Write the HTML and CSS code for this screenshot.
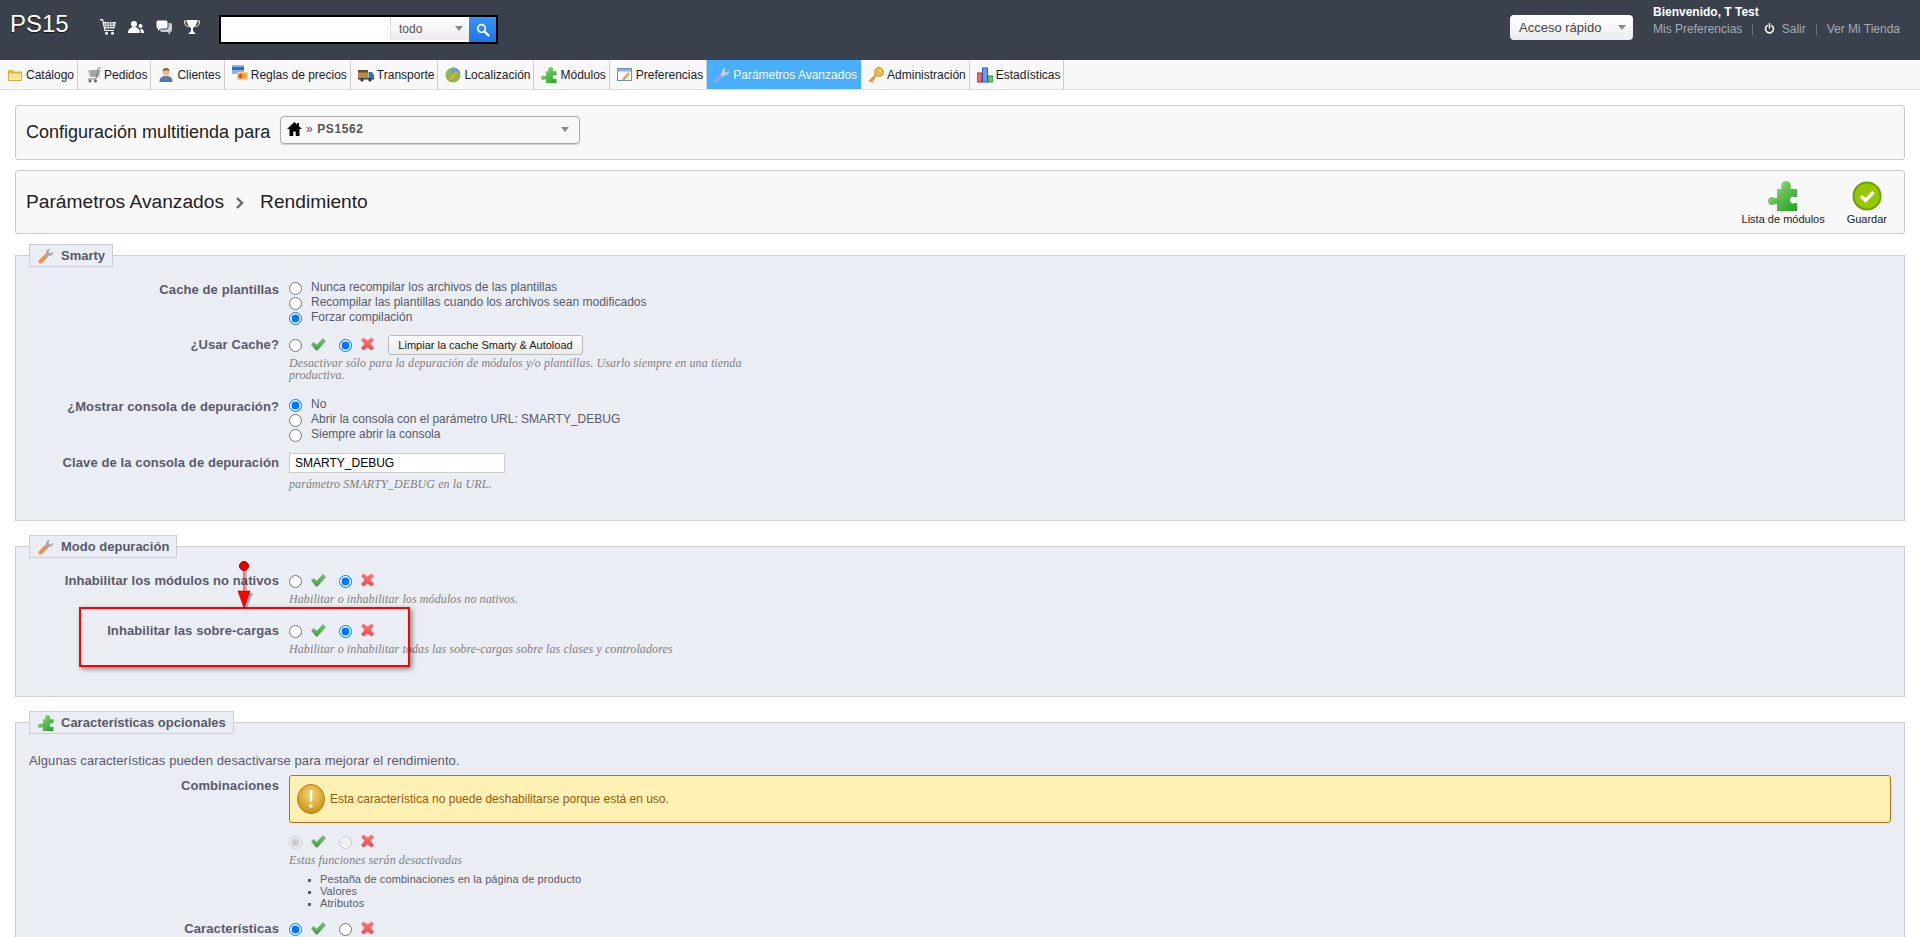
FILE: index.html
```html
<!DOCTYPE html>
<html lang="es">
<head>
<meta charset="utf-8">
<title>Rendimiento</title>
<link rel="stylesheet" href="styles.css">
</head>
<body>
<svg class="defs" width="0" height="0" aria-hidden="true">
  <defs>
    <linearGradient id="gp" x1="0" y1="0" x2="1" y2="1"><stop offset="0" stop-color="#cdeec2"/><stop offset=".45" stop-color="#63c052"/><stop offset="1" stop-color="#25a025"/></linearGradient>
    <linearGradient id="gk" x1="0" y1="0" x2="0" y2="1"><stop offset="0" stop-color="#7cc377"/><stop offset="1" stop-color="#4a9a48"/></linearGradient>
    <linearGradient id="gx" x1="0" y1="0" x2="0" y2="1"><stop offset="0" stop-color="#ff7a7c"/><stop offset="1" stop-color="#ea4a4e"/></linearGradient>
    <radialGradient id="gw" cx=".5" cy=".35" r=".7"><stop offset="0" stop-color="#f6d773"/><stop offset="1" stop-color="#c98a10"/></radialGradient>
    <symbol id="puzzle" viewBox="0 0 30 30"><path fill="url(#gp)" d="M9 8h5c-2-2-1-8 4-8s6 6 4 8h7v8h-2c-3-1-5 0-5 3s2 4 5 3h2v8H9v-7H7c-3 2-7 1-7-3s4-5 7-3h2z"/></symbol>
    <symbol id="wrench" viewBox="0 0 16 16"><path d="M2.500 13.500 8 8" stroke="#f2904a" stroke-width="4" stroke-linecap="round" fill="none"/><path fill="#a9a9a9" d="M8 5c0-3 2-4.500 4.500-4l-2 2 .5 2 2 .5 2-2c.5 2.500-1 4.500-4 4.500L9 10 6.500 7.500z"/></symbol>
    <symbol id="wrench-a" viewBox="0 0 16 16"><path d="M2.500 13.500 8 8" stroke="#8ea9d8" stroke-width="4" stroke-linecap="round" fill="none"/><path fill="#c9ced6" d="M8 5c0-3 2-4.500 4.500-4l-2 2 .5 2 2 .5 2-2c.5 2.500-1 4.500-4 4.500L9 10 6.500 7.500z"/></symbol>
    <symbol id="ok" viewBox="0 0 15 14"><path fill="url(#gk)" d="M0 7.500 3 5l2.500 3L12 1l3 3-8.500 9.500h-1.500z"/></symbol>
    <symbol id="no" viewBox="0 0 15 14"><path fill="url(#gx)" d="M0 3 2.500.5l4 3 4-3L13 3 9.500 7l3.500 4-2.500 2.500-4-3-4 3L0 11l3.500-4z"/></symbol>
  </defs>
</svg>

<header class="topbar">
  <div class="logo">PS15</div>
  <div class="quick">
    <svg class="qi" viewBox="0 0 16 16"><path fill="none" stroke="#fff" stroke-width="1.200" d="M0 .7h2.500l2.500 10.800h9"/><path fill="#fff" d="M4 3h12l-1.500 6.500H5.500z"/><path fill="none" stroke="#3a414c" stroke-width=".6" d="M4.500 5h11M5 7.300h10M7 3v6.500M9.500 3v6.500M12 3v6.500"/><circle cx="6.500" cy="14.300" r="1.500" fill="#fff"/><circle cx="12.500" cy="14.300" r="1.500" fill="#fff"/></svg>
    <svg class="qi" viewBox="0 0 16 16"><circle cx="6" cy="5" r="3" fill="#fff"/><path fill="#fff" d="M0 14c0-4 3-5 4-6h4c1 1 4 2 4 6z"/><circle cx="12.500" cy="7" r="2" fill="#fff"/><path fill="#fff" d="M12 10h2c1 .5 2 1.500 2 4h-3c0-1.500-.5-3-1-4z"/></svg>
    <svg class="qi" viewBox="0 0 16 16"><rect x="4" y="4" width="12" height="9" rx="2" fill="#c9ccd2"/><path fill="#c9ccd2" d="M11 12h3v4z"/><rect y="1" width="12" height="9" rx="2" fill="#fff" stroke="#3a414c"/><path fill="#fff" d="M2 9h3l-3 3z"/></svg>
    <svg class="qi" viewBox="0 0 16 16"><path fill="none" stroke="#fff" d="M3 2H.5c0 3 1 5 4 6M13 2h2.500c0 3-1 5-4 6"/><path fill="#fff" d="M3 1h10c0 5-2 7-4 8v3l3 3H4l3-3V9C5 8 3 6 3 1z"/></svg>
  </div>
  <div class="search">
    <div class="search-input"></div>
    <div class="search-scope"><span>todo</span><i class="caret"></i></div>
    <div class="search-btn"><svg viewBox="0 0 14 14" width="14" height="14"><circle cx="5.500" cy="5.500" r="3.800" fill="none" stroke="#fff" stroke-width="1.800"/><path d="m8.500 8.500 4 4" stroke="#fff" stroke-width="2.400" stroke-linecap="round"/></svg></div>
  </div>
  <div class="top-right">
    <div class="access"><span>Acceso rápido</span><i class="caret"></i></div>
    <div class="user">
      <div class="welcome">Bienvenido, T Test</div>
      <div class="links">
        <a class="l-pref">Mis Preferencias</a><i class="vsep"></i>
        <svg class="power" viewBox="0 0 12 12"><path fill="none" stroke="#fff" stroke-width="1.700" stroke-linecap="round" d="M3.500 2.800a4.400 4.400 0 1 0 5 0M6 .8v4.600"/></svg>
        <a class="l-out">Salir</a><i class="vsep"></i>
        <a class="l-shop">Ver Mi Tienda</a>
      </div>
    </div>
  </div>
</header>

<nav class="tabs">
  <a class="tab"><svg class="ti" viewBox="0 0 16 16"><path fill="#e7b93f" d="M1 3h5l1 1.500h8V14H1z"/><rect x="1.500" y="6" width="13" height="7.500" fill="#fbe69a" stroke="#d9a933" stroke-width=".8"/></svg>Catálogo</a>
  <a class="tab"><svg class="ti" viewBox="0 0 16 16"><path fill="#b4b8b8" d="M3 3h13l-2 7H5z"/><path fill="none" stroke="#777" d="M15.500 .8 13 1.500 11 12H3"/><path fill="none" stroke="#888" stroke-width=".6" d="M5 5h9M5.500 7.500h8M7 3l1 7M10 3v7M13 3l-1 7"/><circle cx="5" cy="14" r="1.500" fill="#666"/><circle cx="10.500" cy="14" r="1.500" fill="#666"/></svg>Pedidos</a>
  <a class="tab"><svg class="ti" viewBox="0 0 16 16"><circle cx="8" cy="5" r="3.500" fill="#eeb88e"/><path fill="#8a5a2e" d="M4.500 4c0-4 7-4 7 0-2-1-5-1-7 0z"/><path fill="#4a78c0" d="M1.500 15c0-5 3-6 6.500-6s6.500 1 6.500 6z"/><path fill="#d8632f" d="M7.500 9h1l.5 4h-2z"/></svg>Clientes</a>
  <a class="tab"><svg class="ti ti-w" viewBox="0 0 16 16"><rect x="0" y="0" width="12" height="9" fill="#8fb3dc"/><rect y="2" width="12" height="3" fill="#2e6fb5"/><rect x="5" y="7" width="11" height="8" rx="1" fill="#f6cf6a"/><circle cx="9" cy="11" r="2.500" fill="#e8383a"/><circle cx="12" cy="11" r="2.500" fill="#f39a2b"/></svg>Reglas de precios</a>
  <a class="tab"><svg class="ti" viewBox="0 0 16 16"><rect y="3" width="10" height="8" fill="#b58a4e"/><rect y="3" width="10" height="2.500" fill="#6e4a20"/><path fill="#3f6fae" d="M10.500 5H14l2 3v4h-5.500z"/><rect y="11" width="16" height="1.500" fill="#444"/><circle cx="4" cy="13" r="1.600" fill="#333"/><circle cx="12" cy="13" r="1.600" fill="#333"/></svg>Transporte</a>
  <a class="tab"><svg class="ti" viewBox="0 0 16 16"><circle cx="8" cy="8" r="7.500" fill="#8cb84f"/><path fill="#5fa0d8" d="M8 .5a7.500 7.500 0 0 1 7 5L10 8 6 5z"/><path stroke="#e9a92f" stroke-width="2.500" d="m5 13 7-8"/></svg>Localización</a>
  <a class="tab"><svg class="ti" viewBox="0 0 30 30"><use href="#puzzle"/></svg>Módulos</a>
  <a class="tab"><svg class="ti" viewBox="0 0 16 16"><rect x=".5" y="1.500" width="14" height="12" fill="#f4f7fc" stroke="#6f8fc0"/><rect x="1" y="2" width="13" height="2.500" fill="#8db0e0"/><path stroke="#e5a53a" stroke-width="2.500" d="m6 13 6-7"/></svg>Preferencias</a>
  <a class="tab tab-on"><svg class="ti" viewBox="0 0 16 16"><use href="#wrench-a"/></svg>Parámetros Avanzados</a>
  <a class="tab"><svg class="ti" viewBox="0 0 16 16"><circle cx="11" cy="5" r="4.500" fill="#eeb93a" stroke="#b9851c" stroke-width=".7"/><circle cx="12" cy="4" r="1.100" fill="#fff5cf"/><path d="m8 8-6.500 6.500M3 13l2 2M5 11l1.500 1.500" stroke="#d39a25" stroke-width="2"/></svg>Administración</a>
  <a class="tab"><svg class="ti" viewBox="0 0 16 16"><rect y="6" width="5" height="9" fill="#ef6a6a" stroke="#c22"/><rect x="5.500" y="1" width="5" height="14" fill="#6d9ce8" stroke="#2a5cc0"/><rect x="11" y="9" width="5" height="6" fill="#79c479" stroke="#2c8a2c"/></svg>Estadísticas</a>
</nav>

<main class="page">
  <section class="card card-shop">
    <span class="shop-title">Configuración multitienda para</span>
    <div class="shop-select">
      <svg class="home" viewBox="0 0 15 14"><path d="M7.500 0 0 7h2.500v7h3.800V9.500h2.400V14h3.800V7H15l-3-2.800V1h-2v1.400z"/></svg>
      <span class="shop-name"><span class="raq">»</span> PS1562</span>
      <i class="caret"></i>
    </div>
  </section>

  <section class="card card-head">
    <h1 class="crumbs"><span>Parámetros Avanzados</span><svg class="chev" viewBox="0 0 8 12"><path d="m1 1 5 5-5 5" fill="none" stroke="#666" stroke-width="2.400"/></svg><span>Rendimiento</span></h1>
    <div class="tools">
      <a class="tool tool-mod"><svg class="tool-i" viewBox="0 0 30 30"><use href="#puzzle"/></svg>Lista de módulos</a>
      <a class="tool tool-save">
        <svg class="tool-i" viewBox="0 0 30 30"><circle cx="15" cy="15" r="14.500" fill="#6d9f00"/><circle cx="15" cy="15" r="12.500" fill="#95c800"/><path d="m9 15 4.500 4.500L21.500 11" fill="none" stroke="#fff" stroke-width="3.600"/></svg>
        Guardar</a>
    </div>
  </section>

  <fieldset class="box box-a">
    <legend><svg class="li" viewBox="0 0 16 16"><use href="#wrench"/></svg>Smarty</legend>
    <div class="row r-tpl">
      <div class="lbl">Cache de plantillas</div>
      <div class="val">
        <label class="opt"><input type="radio" name="tpl">Nunca recompilar los archivos de las plantillas</label>
        <label class="opt"><input type="radio" name="tpl">Recompilar las plantillas cuando los archivos sean modificados</label>
        <label class="opt"><input type="radio" name="tpl" checked>Forzar compilación</label>
      </div>
    </div>
    <div class="row r-cache">
      <div class="lbl lbl-t">¿Usar Cache?</div>
      <div class="val">
        <div class="tog">
          <input type="radio" name="c"><svg class="ic"><use href="#ok"/></svg>
          <input type="radio" name="c" checked><svg class="ic"><use href="#no"/></svg>
          <button class="btn" type="button">Limpiar la cache Smarty &amp; Autoload</button>
        </div>
        <p class="help help-w">Desactivar sólo para la depuración de módulos y/o plantillas. Usarlo siempre en una tienda productiva.</p>
      </div>
    </div>
    <div class="row r-console">
      <div class="lbl">¿Mostrar consola de depuración?</div>
      <div class="val">
        <label class="opt"><input type="radio" name="d" checked>No</label>
        <label class="opt"><input type="radio" name="d">Abrir la consola con el parámetro URL: SMARTY_DEBUG</label>
        <label class="opt"><input type="radio" name="d">Siempre abrir la consola</label>
      </div>
    </div>
    <div class="row r-key">
      <div class="lbl lbl-t">Clave de la consola de depuración</div>
      <div class="val">
        <input class="txt" type="text" value="SMARTY_DEBUG">
        <p class="help help-k">parámetro SMARTY_DEBUG en la URL.</p>
      </div>
    </div>
  </fieldset>

  <fieldset class="box box-b">
    <legend><svg class="li" viewBox="0 0 16 16"><use href="#wrench"/></svg>Modo depuración</legend>
    <div class="row r-mod">
      <div class="lbl lbl-t">Inhabilitar los módulos no nativos</div>
      <div class="val">
        <div class="tog"><input type="radio" name="m"><svg class="ic"><use href="#ok"/></svg><input type="radio" name="m" checked><svg class="ic"><use href="#no"/></svg></div>
        <p class="help">Habilitar o inhabilitar los módulos no nativos.</p>
      </div>
    </div>
    <div class="row r-over">
      <div class="lbl lbl-t">Inhabilitar las sobre-cargas</div>
      <div class="val">
        <div class="tog"><input type="radio" name="o"><svg class="ic"><use href="#ok"/></svg><input type="radio" name="o" checked><svg class="ic"><use href="#no"/></svg></div>
        <p class="help">Habilitar o inhabilitar todas las sobre-cargas sobre las clases y controladores</p>
      </div>
    </div>
  </fieldset>

  <fieldset class="box box-c">
    <legend><svg class="li" viewBox="0 0 30 30"><use href="#puzzle"/></svg>Características opcionales</legend>
    <p class="intro">Algunas características pueden desactivarse para mejorar el rendimiento.</p>
    <div class="row r-comb">
      <div class="lbl lbl-c">Combinaciones</div>
      <div class="val">
        <div class="alert">
          <svg class="al-i" viewBox="0 0 28 30"><ellipse cx="14" cy="15" rx="13.500" ry="14.500" fill="url(#gw)" stroke="#b07c12"/><path fill="#fff" d="M12.500 6h3l-.6 12h-1.800z"/><circle cx="14" cy="22" r="1.700" fill="#fff"/></svg>
          <span>Esta característica no puede deshabilitarse porque está en uso.</span>
        </div>
        <div class="tog tog-off"><input type="radio" name="k" checked disabled><svg class="ic"><use href="#ok"/></svg><input type="radio" name="k" disabled><svg class="ic"><use href="#no"/></svg></div>
        <p class="help">Estas funciones serán desactivadas</p>
        <ul class="feat">
          <li>Pestaña de combinaciones en la página de producto</li>
          <li>Valores</li>
          <li>Atributos</li>
        </ul>
      </div>
    </div>
    <div class="row r-feat">
      <div class="lbl lbl-t">Características</div>
      <div class="val">
        <div class="tog"><input type="radio" name="f" checked><svg class="ic"><use href="#ok"/></svg><input type="radio" name="f"><svg class="ic"><use href="#no"/></svg></div>
      </div>
    </div>
  </fieldset>
</main>

<div class="mark-box"></div>
<svg class="mark-arrow" viewBox="0 0 20 48" width="20" height="48">
  <path d="M12 8v28" stroke="#000" stroke-opacity=".3" stroke-width="1.500"/>
  <path d="M5 32h14l-7 17z" fill="#000" fill-opacity=".3"/>
  <circle cx="10" cy="5" r="4.500" fill="#e60000" stroke="#a00"/>
  <path d="M10 8v24" stroke="#e60000" stroke-width="1"/>
  <path d="M4 30h12l-6 17z" fill="#f00" stroke="#a00" stroke-width=".6"/>
</svg>
</body>
</html>
```
FILE: styles.css
```css
html, body {
  margin: 0;
  height: 937px;
  overflow: hidden;
  background: #fff;
  font-family: "Liberation Sans", Arial, sans-serif;
  font-size: 12px;
  color: #585a69;
}
.defs { position: absolute; }
a { text-decoration: none; white-space: nowrap; }

/* top bar */
.topbar {
  display: flex;
  align-items: flex-start;
  height: 60px;
  background: #3a414c;
  color: #fff;
}
.logo { margin: 10px 0 0 10px; width: 58px; font-size: 24px; line-height: 28px; text-shadow: 0 1px 1px #111; }
.quick { display: flex; gap: 12px; margin: 19px 0 0 32px; }
.qi { width: 16px; height: 16px; }
.search {
  display: flex;
  box-sizing: border-box;
  width: 279px;
  height: 29px;
  margin: 15px 0 0 19px;
  border: 2px solid #000;
  background: #fff;
}
.search-input { width: 169px; }
.search-scope {
  display: flex;
  align-items: center;
  justify-content: space-between;
  box-sizing: border-box;
  width: 79px;
  height: 23px;
  padding: 0 6px 0 8px;
  border-left: 1px dotted #ccc;
  background: linear-gradient(#fff, #ececec);
  color: #555;
  font-size: 12px;
}
.search-btn {
  display: flex;
  align-items: center;
  justify-content: center;
  flex: 1;
  background: linear-gradient(#3a93f2, #1a78e6);
}
.caret { width: 0; height: 0; border: 4px solid transparent; border-top: 5px solid #888; border-bottom: 0; }
.top-right { display: flex; margin-left: auto; padding-right: 20px; }
.access {
  display: flex;
  align-items: center;
  justify-content: space-between;
  box-sizing: border-box;
  width: 123px;
  height: 25px;
  margin-top: 15px;
  padding: 0 7px 0 9px;
  border-radius: 4px;
  background: linear-gradient(#fff, #ececec);
  color: #444;
  font-size: 13px;
}
.user { width: 247px; margin-left: 20px; }
.welcome { margin-top: 5px; font-weight: bold; line-height: 14px; }
.links { display: flex; align-items: center; height: 17px; margin-top: 1px; color: #a5aab3; }
.l-pref { width: 89px; }
.vsep { width: 1px; height: 11px; margin: 2px 0 0 10px; background: #6d727b; }
.power { width: 13px; height: 13px; margin: 0 7px 0 11px; }
.l-shop { margin-left: 10px; }

/* tabs */
.tabs {
  display: flex;
  box-sizing: border-box;
  height: 30px;
  border-bottom: 1px solid #ddd;
  background: #f8f8f8;
}
.tab {
  display: flex;
  align-items: center;
  padding: 0 3px 0 7px;
  border-right: 1px solid #ccc;
  color: #1c1c2a;
}
.ti { width: 16px; height: 16px; margin-right: 3px; flex: none; }
.ti-w { margin-top: -4px; }
.tab-on { padding-right: 4px; background: #49aefe; color: #fff; border-right: 0; }

/* page */
.page { padding: 15px 15px 0; }
.card {
  display: flex;
  align-items: center;
  box-sizing: border-box;
  padding-left: 10px;
  border: 1px solid #ccc;
  border-radius: 3px;
  background: #f8f8f8;
  color: #222;
}
.card-shop { height: 55px; }
.shop-title { font-size: 18px; width: 254px; }
.shop-select {
  display: flex;
  align-items: center;
  box-sizing: border-box;
  width: 300px;
  height: 28px;
  margin-bottom: 5px;
  padding: 0 10px 2px 6px;
  border: 1px solid #aaa;
  border-radius: 4px;
  box-shadow: 0 1px 1px #ccc;
  font-size: 12px;
  font-weight: bold;
  color: #555;
}
.home { width: 15px; height: 14px; margin-right: 4px; }
.shop-name { flex: 1; letter-spacing: .6px; }
.raq { font-weight: normal; }
.card-head { justify-content: space-between; height: 64px; margin-top: 10px; }
.crumbs { display: flex; align-items: center; margin: 0; font-size: 19.2px; font-weight: normal; }
.chev { width: 8px; height: 12px; margin: 2px 16px 0 12px; }
.tools { display: flex; margin: 2px 17px 0 0; }
.tool { display: flex; flex-direction: column; align-items: center; font-size: 11px; line-height: 13px; color: #222; }
.tool-i { width: 30px; height: 30px; margin-bottom: 2px; }
.tool-save { margin-left: 22px; }
.tool-mod { width: 83px; }

/* sections */
.box {
  min-width: 0;
  margin: 14px 0 0;
  padding: 0;
  border: 1px solid #ccced7;
  background: #ebedf4;
}
.box-a { margin-top: 10px; padding: 14px 0 30px; }
.box-b { padding: 13px 0 41px; }
.box-c { padding: 0 0 60px; }
.box legend {
  display: flex;
  align-items: center;
  box-sizing: border-box;
  height: 23px;
  margin-left: 13px;
  padding: 0 7px 0 8px;
  border: 1px solid #ccced7;
  background: #ebedf4;
  font-size: 13px;
  font-weight: bold;
  color: #585a69;
}
.li { width: 16px; height: 16px; margin-right: 7px; }
.row { display: flex; }
.lbl {
  flex: none;
  width: 263px;
  margin-right: 10px;
  text-align: right;
  font-size: 13px;
  font-weight: bold;
  line-height: 18px;
  letter-spacing: .1px;
}
.lbl-t { line-height: 20px; }
.lbl-c { padding-top: 2px; }
.val { flex: 1; min-width: 0; padding-right: 13px; }
.opt { display: flex; align-items: flex-start; height: 15px; line-height: 13px; }
input[type="radio"] { flex: none; width: 13px; height: 13px; margin: 0; }
.opt input { margin: 1px 9px 0 0; }
.r-cache { margin-top: 9px; }
.r-console { margin-top: 17px; }
.r-key { margin-top: 10px; }
.r-over { margin-top: 16px; }
.r-comb { margin-top: 6px; }
.r-feat { margin-top: 10px; }
.tog { display: flex; align-items: center; height: 20px; }
.ic { flex: none; width: 15px; height: 14px; margin: -2px 13px 0 9px; }
.btn {
  box-sizing: border-box;
  width: 195px;
  height: 20px;
  margin-left: -1px;
  padding: 0;
  border: 1px solid #bbb;
  border-radius: 3px;
  background: linear-gradient(#fbfbfb, #ececec);
  font-family: inherit;
  font-size: 11px;
  color: #222;
}
.help {
  margin: 2px 0 0;
  font-family: "Liberation Serif", "Times New Roman", serif;
  font-size: 12px;
  font-style: italic;
  line-height: 12px;
  letter-spacing: .1px;
  color: #7f7f7f;
}
.help-w { width: 470px; }
.help-k { margin-top: 5px; }
.txt {
  display: block;
  box-sizing: border-box;
  width: 216px;
  height: 20px;
  padding: 0 5px;
  border: 1px solid #ccc;
  background: #fff;
  font-family: inherit;
  font-size: 12px;
  color: #000;
}
.intro { margin: 19px 0 0 13px; font-size: 13px; line-height: 16px; letter-spacing: .09px; }
.alert {
  display: flex;
  align-items: center;
  box-sizing: border-box;
  height: 48px;
  padding-left: 7px;
  border: 1px solid #b0701c;
  border-radius: 3px;
  background: #fff1b3;
  color: #9a5a0c;
}
.al-i { width: 28px; height: 30px; margin-right: 5px; }
.tog-off { margin-top: 9px; }
.feat { margin: 7px 0 0; padding: 0 0 0 31px; line-height: 12px; font-size: 11px; letter-spacing: .1px; list-style: square; }
.feat li::marker { font-size: 9px; }

/* annotation laid over the page */
.mark-box {
  position: absolute;
  left: 79px;
  top: 607px;
  box-sizing: border-box;
  width: 331px;
  height: 60px;
  border: 2px solid #f00;
  box-shadow: 2px 2px 5px rgba(0, 0, 0, .45);
}
.mark-arrow { position: absolute; left: 234px; top: 561px; }
```
